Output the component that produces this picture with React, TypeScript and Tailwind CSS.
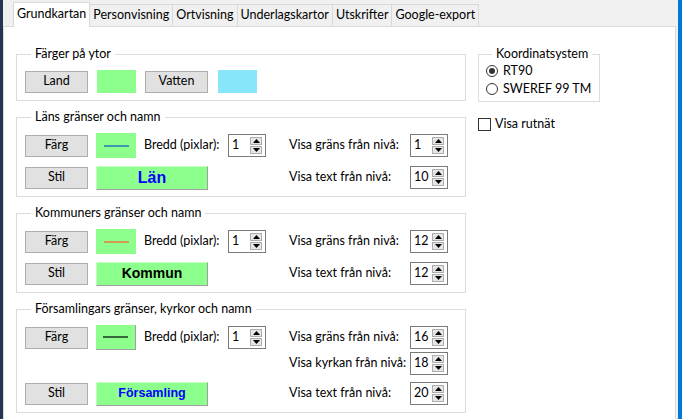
import React from "react";

const ui = { fontFamily: 'Lato, "Noto Sans", sans-serif' };
const bold = { fontFamily: '"Liberation Sans", Arial, sans-serif' };

const Btn = ({ label }: { label: string }) => (
  <div className="flex h-[22px] w-[63px] items-center justify-center border border-[#adadad] bg-[#e1e1e1] text-[12.5px]">
    {label}
  </div>
);

const Arrow = ({ up }: { up?: boolean }) => (
  <div className="flex h-[8px] w-[12px] items-center justify-center border border-[#adadad] bg-[#e6e6e6]">
    <svg width="7" height="4" viewBox="0 0 7 4">
      <polygon points={up ? "0,4 7,4 3.5,0" : "0,0 7,0 3.5,4"} fill="#000" />
    </svg>
  </div>
);

const Spin = ({ value }: { value: string }) => (
  <div className="flex h-[23px] w-[38px] items-center border border-[#7a7a7a] bg-white pl-[3px] pr-[3px]">
    <span className="flex-1 text-[12.5px] leading-none">{value}</span>
    <div className="flex flex-col gap-[1px]">
      <Arrow up />
      <Arrow />
    </div>
  </div>
);

const Swatch = ({ line, raised }: { line: string; raised?: boolean }) => (
  <div
    className={
      "flex h-[25px] w-[40px] items-center justify-center bg-[#8cff8c] " +
      (raised ? "border-r border-b border-[#a0a0a0]" : "")
    }
  >
    <svg width="25" height="2" viewBox="0 0 25 2">
      <line x1="0" y1="1" x2="25" y2="1" stroke={line} strokeWidth="1.2" />
    </svg>
  </div>
);

const Sample = ({ text, cls }: { text: string; cls: string }) => (
  <div
    className={
      "flex h-[24px] w-[112px] items-center justify-center border-t border-l border-t-[#c8f8c8] border-l-[#c8f8c8] border-r border-b border-r-[#a0a0a0] border-b-[#a0a0a0] bg-[#8cff8c] font-bold " +
      cls
    }
    style={bold}
  >
    {text}
  </div>
);

const Right = ({ label, value }: { label: string; value: string }) => (
  <div className="flex items-center">
    <span className="w-[121px] text-[12.5px]">{label}</span>
    <Spin value={value} />
  </div>
);

const Group = ({ title, children, cls }: { title: string; children: React.ReactNode; cls?: string }) => (
  <fieldset className={"border border-[#dcdcdc] px-[8px] " + (cls ?? "")}>
    <legend className="ml-[6px] px-[4px] text-[12.5px] leading-[16px]">{title}</legend>
    {children}
  </fieldset>
);

const ColorRow = ({ line, raised, value }: { line: string; raised?: boolean; value: string }) => (
  <div className="flex h-[25px] items-center">
    <div className="flex w-[264px] items-center">
      <Btn label="Färg" />
      <div className="ml-[8px]">
        <Swatch line={line} raised={raised} />
      </div>
      <span className="ml-[8px] w-[84px] text-[12.5px]">Bredd (pixlar):</span>
      <Spin value="1" />
    </div>
    <Right label="Visa gräns från nivå:" value={value} />
  </div>
);

const StyleRow = ({ text, cls, value }: { text: string; cls: string; value: string }) => (
  <div className="flex h-[25px] items-center">
    <div className="flex w-[264px] items-center">
      <Btn label="Stil" />
      <div className="ml-[8px]">
        <Sample text={text} cls={cls} />
      </div>
    </div>
    <Right label="Visa text från nivå:" value={value} />
  </div>
);

const tabs = ["Personvisning", "Ortvisning", "Underlagskartor", "Utskrifter", "Google-export"];

export default function App() {
  return (
    <div className="flex h-[419px] w-[682px] bg-[#f0f0f0] text-black" style={ui}>
      <div className="w-[3px] bg-[#22364f]" />
      <div className="flex flex-1 flex-col">
        <div className="flex h-[26px] items-end bg-[#f0f0f0] pl-[10px]">
          <div className="relative z-10 -mb-px flex h-[25px] items-center border border-b-0 border-[#d9d9d9] bg-white px-[3px] pb-[2px] text-[12.5px]">
            Grundkartan
          </div>
          {tabs.map((t) => (
            <div
              key={t}
              className="flex h-[22px] items-center border border-b-0 border-l-0 border-[#d9d9d9] bg-[#f0f0f0] px-[3px] text-[12.5px]"
            >
              {t}
            </div>
          ))}
        </div>
        <div className="flex flex-1 gap-[12px] border border-b-0 border-[#dadada] bg-white pl-[12px] pt-[19px]">
          <div className="flex w-[450px] flex-col gap-[8px]">
            <Group title="Färger på ytor" cls="pt-[8px] pb-[7px]">
              <div className="flex h-[23px] items-center">
                <Btn label="Land" />
                <div className="ml-[9px] h-[23px] w-[39px] bg-[#8cff8c]" />
                <div className="ml-[9px]">
                  <Btn label="Vatten" />
                </div>
                <div className="ml-[10px] h-[23px] w-[39px] bg-[#88e6fa]" />
              </div>
            </Group>
            <Group title="Läns gränser och namn" cls="pt-[8px] pb-[6px]">
              <div className="flex flex-col gap-[7px]">
                <ColorRow line="#1050c8" value="1" />
                <StyleRow text="Län" cls="text-[16px] text-[#0000ff]" value="10" />
              </div>
            </Group>
            <Group title="Kommuners gränser och namn" cls="pt-[8px] pb-[6px]">
              <div className="flex flex-col gap-[7px]">
                <ColorRow line="#ff5a28" value="12" />
                <StyleRow text="Kommun" cls="text-[14px] text-black" value="12" />
              </div>
            </Group>
            <Group title="Församlingars gränser, kyrkor och namn" cls="pt-[8px] pb-[6px]">
              <div className="flex flex-col">
                <ColorRow line="#000" raised value="16" />
                <div className="mt-[1px] flex h-[25px] items-center pl-[264px]">
                  <Right label="Visa kyrkan från nivå:" value="18" />
                </div>
                <div className="mt-[5px]">
                  <StyleRow text="Församling" cls="text-[12.5px] text-[#0000ff]" value="20" />
                </div>
              </div>
            </Group>
          </div>
          <div className="flex flex-col">
            <Group title="Koordinatsystem" cls="w-[113px] !px-[7px] pb-[3px]">
              <div className="flex h-[18px] items-center gap-[5px] text-[12.5px]">
                <div className="flex h-[12px] w-[12px] items-center justify-center rounded-full border border-[#333]">
                  <div className="h-[6px] w-[6px] rounded-full bg-[#333]" />
                </div>
                RT90
              </div>
              <div className="flex h-[18px] items-center gap-[5px] text-[12.5px]">
                <div className="h-[12px] w-[12px] rounded-full border border-[#333]" />
                SWEREF 99 TM
              </div>
            </Group>
            <div className="mt-[13px] flex items-center gap-[4px] text-[12.5px]">
              <div className="h-[13px] w-[13px] border border-[#333]" />
              Visa rutnät
            </div>
          </div>
        </div>
      </div>
      <div className="w-[2px] bg-[#f0f0f0]" />
      <div className="w-[4px] bg-[#0078d7]" />
    </div>
  );
}
